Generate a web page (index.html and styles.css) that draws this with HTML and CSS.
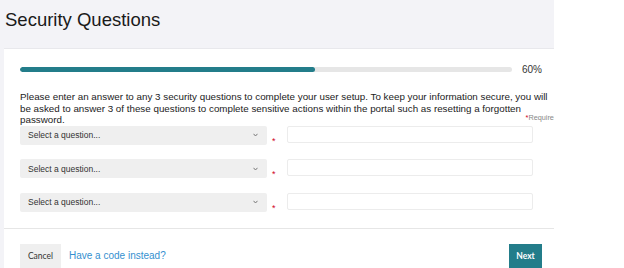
FILE: index.html
```html
<!DOCTYPE html>
<html>
<head>
<meta charset="utf-8">
<link rel="stylesheet" href="styles.css">
</head>
<body>
<div class="page">
  <h1 class="title">Security Questions</h1>
  <div class="card">
    <div class="progress-row">
      <div class="track"><div class="fill" style="width:60%"></div></div>
      <span class="pct">60%</span>
    </div>
    <p class="intro">Please enter an answer to any 3 security questions to complete your user setup. To keep your information secure, you will be asked to answer 3 of these questions to complete sensitive actions within the portal such as resetting a forgotten password.</p>
    <div class="required"><span class="star">*</span>Required</div>
    <div class="rows">
      <div class="row">
        <div class="select"><span>Select a question...</span><svg class="chev" width="5" height="4" viewBox="0 0 5 4"><path d="M0.5 0.8 L2.5 3 L4.5 0.8" fill="none" stroke="#777" stroke-width="1"/></svg></div>
        <span class="ast">*</span>
        <div class="input"></div>
      </div>
      <div class="row">
        <div class="select"><span>Select a question...</span><svg class="chev" width="5" height="4" viewBox="0 0 5 4"><path d="M0.5 0.8 L2.5 3 L4.5 0.8" fill="none" stroke="#777" stroke-width="1"/></svg></div>
        <span class="ast">*</span>
        <div class="input"></div>
      </div>
      <div class="row">
        <div class="select"><span>Select a question...</span><svg class="chev" width="5" height="4" viewBox="0 0 5 4"><path d="M0.5 0.8 L2.5 3 L4.5 0.8" fill="none" stroke="#777" stroke-width="1"/></svg></div>
        <span class="ast">*</span>
        <div class="input"></div>
      </div>
    </div>
    <div class="footer">
      <div class="btn cancel">Cancel</div>
      <a class="link">Have a code instead?</a>
      <div class="btn next">Next</div>
    </div>
  </div>
</div>
</body>
</html>
```

FILE: styles.css
```css
html, body {
  margin: 0;
  padding: 0;
  background: #ffffff;
  height: 268px;
  overflow: hidden;
}
.page {
  width: 554px;
  height: 268px;
  background: #f3f3f7;
  overflow: hidden;
  font-family: "Liberation Sans", Arial, sans-serif;
  color: #222;
}
.title {
  margin: 0;
  padding: 9px 0 0 5px;
  height: 39px;
  font-size: 18.5px;
  font-weight: normal;
  line-height: 22px;
  color: #1a1a1a;
}
.card {
  margin-left: 4px;
  width: 538px;
  padding: 14px 16px 20px 16px;
  background: #ffffff;
  border-top: 1px solid #e8e8ec;
  height: 300px;
}
.progress-row {
  display: flex;
  align-items: center;
  height: 12px;
  width: 522px;
}
.track {
  width: 493px;
  height: 5px;
  border-radius: 3px;
  background: #e6e6e6;
  overflow: hidden;
}
.fill {
  height: 100%;
  background: #237d8a;
  border-radius: 3px;
}
.pct {
  margin-left: 10px;
  font-size: 10px;
  color: #333;
}
.intro {
  margin: 16px 0 0 0;
  width: 536px;
  font-size: 9.8px;
  line-height: 11.5px;
  color: #222;
}
.required {
  text-align: right;
  white-space: nowrap;
  font-size: 7.3px;
  line-height: 8px;
  color: #888;
  margin: -12px 0 4px 0;
  height: 8px;
}
.star { color: #d0021b; }
.rows {
  display: flex;
  flex-direction: column;
  gap: 14.5px;
  width: 522px;
}
.row {
  display: flex;
  align-items: flex-start;
  height: 19px;
}
.select {
  width: 247px;
  height: 19px;
  box-sizing: border-box;
  background: #efefef;
  border-radius: 2px;
  padding: 0 8px;
  display: flex;
  align-items: center;
  justify-content: space-between;
  font-size: 8.5px;
  color: #333;
}
.chev { margin-right: 1px; }
.ast {
  color: #d0021b;
  font-size: 9px;
  line-height: 9px;
  margin: 11px 0 0 5px;
  width: 15px;
}
.input {
  width: 246px;
  height: 17px;
  box-sizing: border-box;
  border: 1px solid #ececec;
  border-radius: 2px;
  background: #fff;
}
.footer {
  margin-top: 16px;
  border-top: 1px solid #e6e6e6;
  margin-left: -16px;
  padding: 15px 20px 0 16px;
  width: 558px;
  box-sizing: border-box;
  display: flex;
  align-items: center;
}
.btn {
  height: 24px;
  display: flex;
  align-items: center;
  justify-content: center;
  font-family: "Lato", "Liberation Sans", sans-serif;
  font-size: 8.5px;
  box-sizing: border-box;
}
.cancel {
  width: 41px;
  background: #efefef;
  color: #333;
}
.link {
  margin-left: 8px;
  font-size: 10px;
  color: #3590cf;
}
.next {
  margin-left: auto;
  width: 33px;
  background: #237d8a;
  color: #fff;
  font-weight: bold;
}
```
